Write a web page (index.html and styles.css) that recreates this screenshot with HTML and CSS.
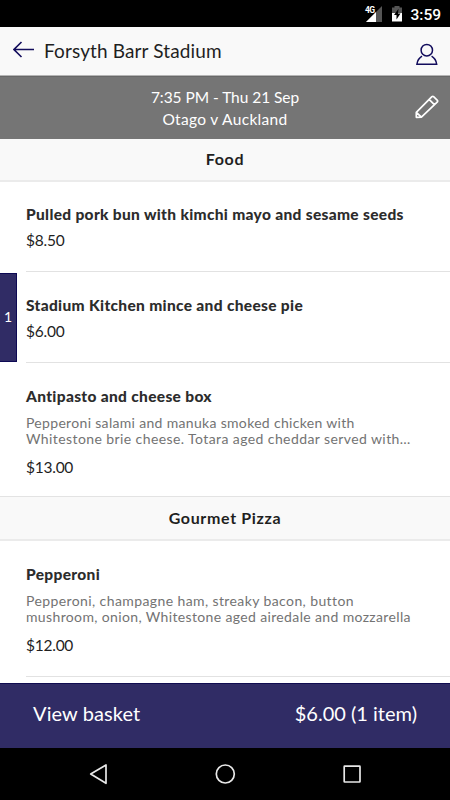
FILE: index.html
```
<!DOCTYPE html>
<html lang="en">
<head>
<meta charset="utf-8">
<meta name="viewport" content="width=device-width, initial-scale=1">
<title>Forsyth Barr Stadium</title>
<link rel="stylesheet" href="styles.css">
</head>
<body>
<div class="screen">
  <div class="status">
    <svg class="signal" viewBox="0 0 20 18" width="20" height="18">
      <path d="M19 2V18H3z" fill="#555"/>
      <path d="M13 8V18H3z" fill="#fff"/>
    </svg>
    <span class="network">4G</span>
    <svg class="battery" viewBox="0 0 12 16" width="12" height="16">
      <path d="M3.500 0h5v1.500H11V7H1V1.500h2.500z" fill="#555"/>
      <path d="M1 7h10v8.500H1z" fill="#fff"/>
      <path d="M7.500 2.800 3 9h2.500V13.500L9.500 7.500h-2.500z" fill="#000"/>
    </svg>
    <span class="clock">3:59</span>
  </div>
  <header class="topbar">
    <svg class="back" viewBox="0 0 22 17" width="22" height="17" fill="none" stroke="#120c5c" stroke-width="1.600">
      <path d="M21 8.500H1M8.500 1 1 8.500 8.500 16"/>
    </svg>
    <h1 class="title">Forsyth Barr Stadium</h1>
    <svg class="user" viewBox="0 0 24 24" width="24" height="24" fill="none" stroke="#120c5c" stroke-width="1.500">
      <ellipse cx="11.800" cy="7.200" rx="5.700" ry="5.800"/>
      <path d="M7 13.200C4.400 14.800 2.400 17.400 1.900 21.300H21.700C21.200 17.400 19.200 14.800 16.600 13.200"/>
    </svg>
  </header>
  <section class="event">
    <div class="event-text">
      <div class="event-time">7:35 PM - Thu 21 Sep</div>
      <div class="event-name">Otago v Auckland</div>
    </div>
    <svg class="edit" viewBox="0 0 26 26" width="26" height="26" fill="none" stroke="#fff" stroke-width="1.700" stroke-linejoin="round">
      <path d="M2.300 23.300V18.300L17.900 2.700Q18.800 2 19.600 2.700L23.400 6.300Q24.100 7 23.400 7.900L7.400 23.200zM2.300 18.300 7.400 23.200M15.100 5.400l5.500 5.500"/>
    </svg>
  </section>
  <main class="menu">
    <h2 class="section food">Food</h2>
    <article class="item">
      <h3 class="name pork">Pulled pork bun with kimchi mayo and sesame seeds</h3>
      <div class="price">$8.50</div>
    </article>
    <article class="item selected">
      <span class="qty">1</span>
      <h3 class="name pie">Stadium Kitchen mince and cheese pie</h3>
      <div class="price">$6.00</div>
    </article>
    <article class="item detailed">
      <h3 class="name box">Antipasto and cheese box</h3>
      <p class="desc"><span class="d1">Pepperoni salami and manuka smoked chicken with</span><br><span class="d2">Whitestone brie cheese. Totara aged cheddar served with…</span></p>
      <div class="price">$13.00</div>
    </article>
    <h2 class="section pizza">Gourmet Pizza</h2>
    <article class="item detailed last">
      <h3 class="name pep">Pepperoni</h3>
      <p class="desc"><span class="d3">Pepperoni, champagne ham, streaky bacon, button</span><br><span class="d4">mushroom, onion, Whitestone aged airedale and mozzarella</span></p>
      <div class="price">$12.00</div>
    </article>
  </main>
  <footer class="basket">
    <span class="basket-label">View basket</span>
    <span class="basket-total">$6.00 (1 item)</span>
  </footer>
  <nav class="nav">
    <svg viewBox="0 0 24 24" width="24" height="24"><path d="M20 3V21.300L4.700 12z"/></svg>
    <svg viewBox="0 0 24 24" width="24" height="24"><circle cx="12.300" cy="12" r="9"/></svg>
    <svg viewBox="0 0 24 24" width="24" height="24"><rect x="4.200" y="4.200" width="15.800" height="15.800" rx=".5"/></svg>
  </nav>
</div>
</body>
</html>
```
FILE: styles.css
```
* { box-sizing: border-box; margin: 0; padding: 0; }
body { font-family: Lato, "Liberation Sans", sans-serif; color: #1f1f1f; background: #fff; font-variant-ligatures: none; }
svg { display: block; flex: none; }
h1, h2, h3 { font-weight: normal; }
.screen { width: 450px; height: 800px; display: flex; flex-direction: column; overflow: hidden; white-space: nowrap; }

.status { position: relative; height: 27px; flex: none; background: #000; color: #fff; display: flex; justify-content: flex-end; padding: 4px 9px 0 0; font-family: Roboto, sans-serif; }
.signal { margin-right: 8px; }
.network { position: absolute; left: 365px; top: 5px; font-size: 8.500px; line-height: 10px; font-weight: 700; letter-spacing: -.7px; }
.battery { margin: 2px 7px 0 0; }
.clock { font-size: 15.500px; font-weight: 500; line-height: 22px; }

.topbar { height: 49px; flex: none; background: #f9f9f9; border-bottom: 1px solid #b5b5b5; display: flex; align-items: flex-start; padding: 0 11px 0 13px; }
.back { margin-top: 14px; }
.title { flex: 1; margin-left: 9px; font-size: 19px; line-height: 24px; margin-top: 12px; letter-spacing: .13px; }
.user { margin-top: 16px; }

.event { height: 63px; flex: none; background: #757575; border-top: 1px solid #686868; color: #fff; display: flex; padding-right: 10px; }
.event-text { flex: 1; padding: 10px 0 0 36px; text-align: center; font-size: 15.500px; }
.event-time { line-height: 21px; letter-spacing: -.05px; }
.event-name { line-height: 22px; letter-spacing: .33px; }
.edit { margin-top: 17px; }

.menu { flex: none; height: 544px; overflow: hidden; }
.section { height: 43px; background: #f9f9f9; border-bottom: 2px solid #ebebeb; text-align: center; font-size: 16px; line-height: 39px; font-weight: 700; letter-spacing: .65px; }
.pizza { height: 45px; border-top: 1px solid #e3e3e3; line-height: 42px; }
.item { position: relative; height: 90px; margin-left: 26px; padding-top: 22px; border-bottom: 1px solid #e2e2e2; }
.item.selected { height: 91px; padding-top: 23px; }
.name { font-size: 15.500px; line-height: 20px; font-weight: 900; color: #2c2c2c; letter-spacing: .32px; }
.price { font-size: 15.500px; line-height: 20px; margin-top: 6px; letter-spacing: -.25px; }
.detailed { height: 133px; padding-top: 23px; border-bottom: 0; }
.detailed.last { height: 136px; border-bottom: 1px solid #e2e2e2; }
.desc { font-size: 14px; line-height: 16px; color: #737373; margin-top: 9px; }
.d1 { letter-spacing: .32px; }
.d2 { letter-spacing: .41px; }
.d3 { letter-spacing: .4px; }
.d4 { letter-spacing: .36px; }
.detailed .price { margin-top: 10px; }
.qty { position: absolute; left: -26px; top: 1px; width: 17px; height: 89px; background: #302c65; border: 1px solid #0d0954; border-left: 0; color: #fff; font-size: 14px; line-height: 85px; text-align: center; }

.basket { height: 65px; flex: none; background: #302c65; border-top: 1px solid #100c50; color: #fff; display: flex; justify-content: space-between; padding: 0 33px; font-size: 20px; line-height: 58px; }
.basket-label { letter-spacing: .1px; }
.nav { height: 52px; flex: none; background: #000; display: flex; justify-content: space-between; padding: 14px 86px 0; }
.nav svg { fill: none; stroke: #e8e8e8; stroke-width: 1.700; stroke-linejoin: round; }
```
